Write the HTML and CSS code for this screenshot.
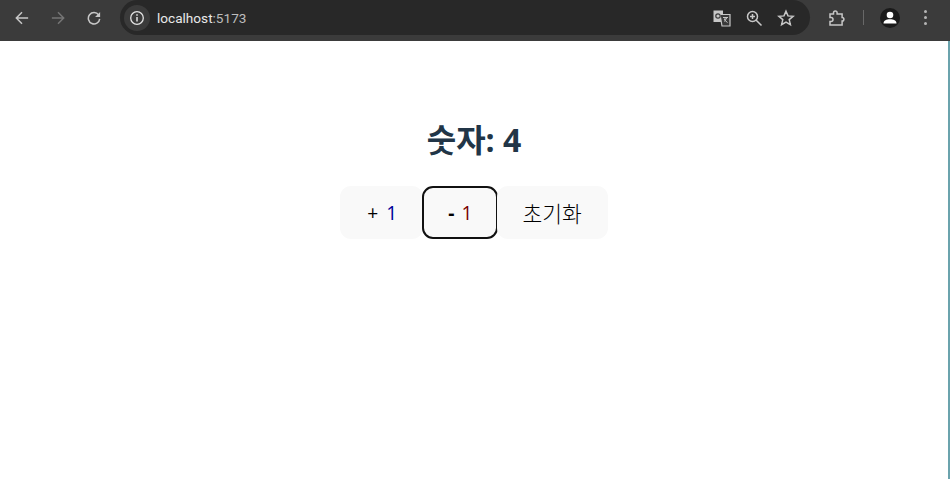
FILE: index.html
```html
<!DOCTYPE html>
<html lang="ko">
<head>
    <meta charset="UTF-8">
    <title>localhost:5173</title>
    <link rel="stylesheet" href="styles.css">
</head>
<body>
    <div class="toolbar">
        <div class="nav">
            <svg class="icon-nav" viewBox="0 0 16 16"><path d="M15 8H2M8 1.500 1.500 8 8 14.500" fill="none" stroke="#c7c7c7" stroke-width="1.700"/></svg>
            <svg class="icon-nav" viewBox="0 0 16 16"><path d="M1 8h13M8 1.500 14.500 8 8 14.500" fill="none" stroke="#757575" stroke-width="1.700"/></svg>
            <svg class="icon-nav" viewBox="0 0 16 16"><path d="M13.300 4.500A6.500 6.500 0 1 0 14.500 9" fill="none" stroke="#c7c7c7" stroke-width="1.700"/><path d="M15 1v5.800H9.200z" fill="#c7c7c7"/></svg>
        </div>
        <div class="omnibox">
            <span class="site-info">
                <svg viewBox="0 0 16 16" width="16" height="16"><circle cx="8" cy="8" r="6.300" fill="none" stroke="#e3e3e3" stroke-width="1.300"/><path d="M8 7v4.500M8 4.300v1.500" stroke="#e3e3e3" stroke-width="1.500"/></svg>
            </span>
            <span class="url">localhost<span class="port">:5173</span></span>
            <span class="omni-icons">
                <svg class="icon" viewBox="0 0 18 18"><path d="M0.500 1.500h9.500v11.500H0.500z" fill="#c7c7c7"/><path d="M7 5.500h10V17H9z" fill="#3a3a3a" stroke="#c7c7c7" stroke-width="1.200"/><circle cx="5" cy="7" r="2.200" fill="none" stroke="#3a3a3a" stroke-width="1.200"/><path d="M10 8.500h5M12.500 8l-1 3 3 2.500M14 8.500l-2.500 4" fill="none" stroke="#c7c7c7"/></svg>
                <svg class="icon" viewBox="0 0 18 18"><circle cx="7.500" cy="7.500" r="5" fill="none" stroke="#c7c7c7" stroke-width="1.500"/><path d="M11 11l5.500 5.500M7.500 5v5M5 7.500h5" stroke="#c7c7c7" stroke-width="1.500"/></svg>
                <svg class="icon" viewBox="0 0 18 18"><path d="M9 2.200l2 4.700 5.100.4-3.900 3.300 1.200 5L9 13l-4.400 2.600 1.200-5-3.900-3.300 5.100-.4z" fill="none" stroke="#c7c7c7" stroke-width="1.500"/></svg>
            </span>
        </div>
        <div class="actions">
            <svg class="icon" viewBox="0 0 18 18"><path d="M2 5h3.500V3.800a1.800 1.800 0 0 1 3.600 0V5h5v3.500a1.800 1.800 0 0 1 0 3.600V16H2v-3.500h1a2 2 0 0 0 0-4H2z" fill="none" stroke="#c7c7c7" stroke-width="1.500"/></svg>
            <span class="divider"></span>
            <span class="avatar">
                <svg viewBox="0 0 20 20" width="20" height="20"><circle cx="10" cy="7" r="3.300" fill="#fff"/><path d="M3.500 15.500c0-3 3-4.300 6.500-4.300s6.500 1.300 6.500 4.300z" fill="#fff"/></svg>
            </span>
            <span class="menu-dots"><i></i><i></i><i></i></span>
        </div>
    </div>
    <div class="viewport">
        <div class="app">
            <h1 class="count">숫자: 4</h1>
            <div class="buttons">
                <button class="btn btn-plus"><span class="plus">+</span> <span class="plus-one">1</span></button>
                <button class="btn btn-focus"><span class="minus">-</span> <span class="minus-one">1</span></button>
                <button class="btn btn-reset">초기화</button>
            </div>
        </div>
        <div class="edge"></div>
    </div>
</body>
</html>
```

FILE: styles.css
```css
html, body {
    height: 100%;
}
body {
    margin: 0;
    display: flex;
    flex-direction: column;
    overflow: hidden;
    background: #fff;
    font-family: 'Open Sans', 'Noto Sans CJK KR', sans-serif;
}
.toolbar {
    height: 41px;
    flex: none;
    display: flex;
    align-items: center;
    background: #3b3b3b;
    box-sizing: border-box;
    padding-bottom: 6px;
}
.icon {
    width: 18px;
    height: 18px;
    flex: none;
}
.icon-nav {
    width: 14px;
    height: 14px;
    flex: none;
}
.nav {
    display: flex;
    align-items: center;
    gap: 22px;
    padding-left: 15px;
    width: 107px;
    box-sizing: border-box;
}
.omnibox {
    width: 690px;
    height: 35px;
    margin-left: 13px;
    border-radius: 18px;
    background: #282828;
    display: flex;
    align-items: center;
    box-sizing: border-box;
    padding-left: 4px;
}
.site-info {
    width: 26px;
    height: 26px;
    border-radius: 50%;
    background: #3b3b3b;
    display: flex;
    align-items: center;
    justify-content: center;
}
.url {
    margin-left: 7px;
    font-family: 'Roboto', sans-serif;
    font-size: 13.600px;
    color: #e8e8e8;
}
.port {
    color: #bdbdbd;
}
.omni-icons {
    margin-left: auto;
    margin-right: 15px;
    display: flex;
    gap: 14px;
}
.actions {
    display: flex;
    align-items: center;
    padding-left: 18px;
}
.divider {
    width: 1px;
    height: 15px;
    background: #686868;
    margin: 0 16px 0 17px;
}
.avatar {
    width: 20px;
    height: 20px;
    border-radius: 50%;
    background: #1a1a1a;
    display: flex;
}
.menu-dots {
    display: flex;
    flex-direction: column;
    gap: 3px;
    margin-left: 24px;
}
.menu-dots i {
    width: 3px;
    height: 3px;
    border-radius: 50%;
    background: #b5b5b5;
}
.viewport {
    flex: 1;
    display: flex;
}
.app {
    flex: 1;
    text-align: center;
    padding-top: 80px;
}
.edge {
    width: 2px;
    background: #6ba3ad;
}
.count {
    margin: 0;
    font-size: 32px;
    line-height: 38px;
    font-weight: 700;
    color: #213547;
}
.buttons {
    margin-top: 27px;
    display: flex;
    justify-content: center;
}
.btn {
    height: 53px;
    padding: 0 25px;
    border: 2px solid transparent;
    border-radius: 11px;
    background: #f9f9f9;
    font-family: inherit;
    font-size: 19.200px;
    color: #000;
}
.btn-plus {
    padding: 0 24px 0 25px;
}
.btn-focus {
    border-color: #111;
    margin: 0 -1px;
    padding: 0 24px;
}
.btn-reset {
    padding: 0 24px 0 23px;
    font-size: 21.500px;
    font-weight: 300;
}
.plus {
    margin-right: 3px;
}
.minus {
    margin-right: 2px;
    font-weight: 700;
}
.plus-one {
    color: #000099;
}
.minus-one {
    color: #7a0000;
}
```
